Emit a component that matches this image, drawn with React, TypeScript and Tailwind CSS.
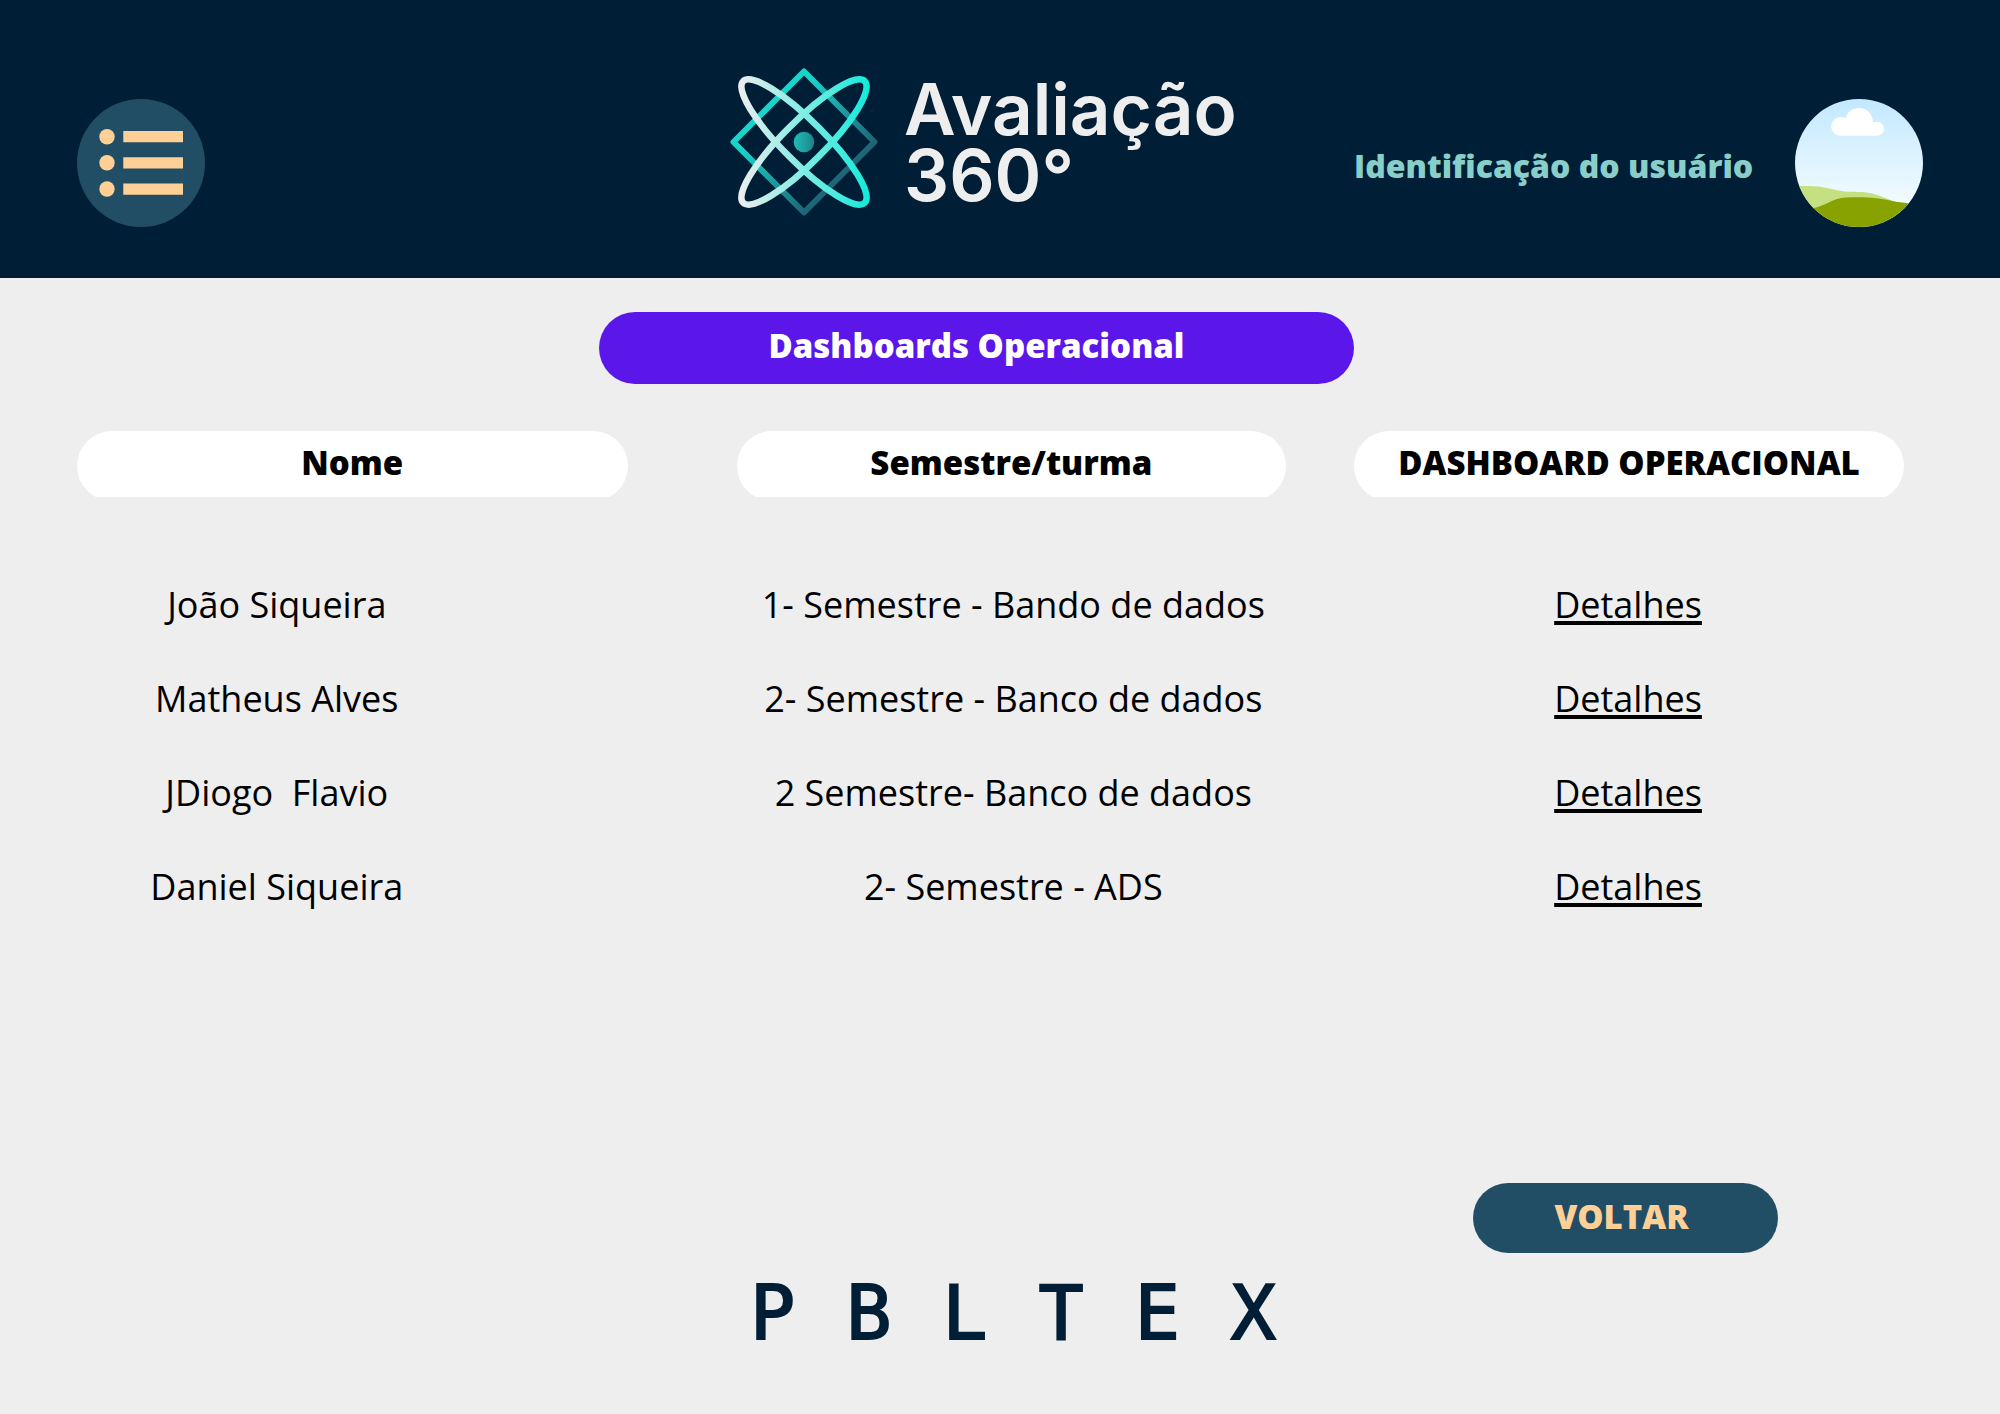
const rows = [
  { nome: "João Siqueira", turma: "1- Semestre - Bando de dados" },
  { nome: "Matheus Alves", turma: "2- Semestre - Banco de dados" },
  { nome: "JDiogo\u00a0 Flavio", turma: "2 Semestre- Banco de dados" },
  { nome: "Daniel Siqueira", turma: "2- Semestre - ADS" },
];

function AtomLogo() {
  return (
    <svg viewBox="0 0 148 148" className="size-[148px] shrink-0" fill="none" aria-hidden="true">
      <defs>
        <linearGradient id="diamond" gradientUnits="userSpaceOnUse" x1="38" y1="38" x2="110" y2="110">
          <stop offset="0" stopColor="#17d6cb" />
          <stop offset="0.15" stopColor="#18d0c7" />
          <stop offset="1" stopColor="#1f6476" />
        </linearGradient>
        <linearGradient id="orbit" gradientUnits="userSpaceOnUse" x1="9" y1="0" x2="139" y2="0">
          <stop offset="0" stopColor="#eeeeee" />
          <stop offset="1" stopColor="#12eadb" />
        </linearGradient>
        <linearGradient id="core" x1="0" y1="0" x2="1" y2="0">
          <stop offset="0" stopColor="#1bc0b9" />
          <stop offset="1" stopColor="#20818c" />
        </linearGradient>
      </defs>
      <path d="M74 3.5 144.500 74 74 144.500 3.500 74Z" stroke="url(#diamond)" strokeWidth="6" strokeLinejoin="round" />
      <path
        d="M134.800 13.200C126.700 5.100 93.400 25 59.400 59.400C25 93.400 5.100 126.700 13.200 134.800C21.300 142.900 54.600 123 88.600 88.600C123 54.600 142.900 21.300 134.800 13.200Z"
        stroke="url(#orbit)"
        strokeWidth="6.500"
      />
      <path
        d="M13.200 13.200C5.100 21.300 25 54.600 59.400 88.600C93.400 123 126.700 142.900 134.800 134.800C142.900 126.700 123 93.400 88.600 59.400C54.600 25 21.300 5.100 13.200 13.200Z"
        stroke="url(#orbit)"
        strokeWidth="6.500"
      />
      <circle cx="74" cy="74" r="10.300" fill="url(#core)" />
    </svg>
  );
}

function MenuIcon() {
  return (
    <svg viewBox="0 0 128 128" className="size-32" aria-hidden="true">
      <circle cx="64" cy="64" r="64" fill="#224e65" />
      <g fill="#ffd096">
        <circle cx="30" cy="37.700" r="7.700" />
        <circle cx="30" cy="63.700" r="7.700" />
        <circle cx="30" cy="90" r="7.700" />
        <path d="M46.300 32h59.700v11.300H46.300zM46.300 58.300h59.700v11.300H46.300zM46.300 84.500h59.700v11.300H46.300z" />
      </g>
    </svg>
  );
}

function Avatar() {
  return (
    <svg viewBox="0 0 128 128" className="size-32 shrink-0 rounded-full" role="img" aria-label="Foto do usuário">
      <defs>
        <linearGradient id="sky" x1="0" y1="0" x2="0" y2="1">
          <stop offset="0" stopColor="#c3e8ff" />
          <stop offset="0.85" stopColor="#f4fcff" />
        </linearGradient>
      </defs>
      <path d="M0 0h128v128H0z" fill="url(#sky)" />
      <path
        d="M45.500 36.700a9.300 9.300 0 0 1 0-18.600q3 0 5.500 1.200C52 13 57.500 9 64 9c8 0 14 6 14 14.500q2-1 4-.8a7 7 0 0 1 0 14z"
        fill="#fff"
      />
      <path d="M0 87h14c16 0 28 5.500 40 5.800c14 .3 18-.2 30 3.700c9 3 16 8 31 8v15H0z" fill="#c5e080" />
      <path d="M0 112c8-1 14-1 19-3c11-2 19-10 32-10.500c12-.5 26-.5 39 2c10 2 17 4 38 4v24H0z" fill="#88a200" />
    </svg>
  );
}

export default function App() {
  return (
    <div className="min-h-screen bg-[#eeeeee] font-['Open_Sans','Noto_Sans',sans-serif] text-black">
      <header className="grid grid-cols-[653fr_624fr_569fr] bg-[#001e36] px-[77px] pt-[68px] pb-[51px]">
        <button type="button" aria-label="Menu" className="mt-[31px] self-start justify-self-start rounded-full">
          <MenuIcon />
        </button>
        <div className="flex items-start gap-[26px]">
          <AtomLogo />
          <h1 className="pt-2 font-['Inter',sans-serif] text-[71px] leading-[66px] font-semibold text-[#eeeeee]">
            Avaliação
            <br />
            360°
          </h1>
        </div>
        <div className="mt-[31px] flex items-center justify-between self-start">
          <span className="pt-[6px] text-[32px] leading-[44px] font-extrabold whitespace-nowrap text-[#88cfca]">
            Identificação do usuário
          </span>
          <Avatar />
        </div>
      </header>

      <main className="pr-24 pl-[77px]">
        <div className="flex pt-[34px] pl-[522px]">
          <h2 className="w-[755px] rounded-full bg-[#5b16ea] pt-3 pb-4 text-center text-[33px] leading-[44px] font-extrabold text-white">
            Dashboards Operacional
          </h2>
        </div>

        <table className="mt-[47px] w-full table-fixed border-collapse">
          <colgroup>
            <col className="w-[36.1%]" />
            <col className="w-[33.8%]" />
            <col className="w-[30.1%]" />
          </colgroup>
          <thead>
            <tr>
              <th className="p-0 pr-[109px]">
                <div className="h-[66px] overflow-hidden">
                  <div className="h-[70px] rounded-full bg-white pt-[10px] text-[33px] leading-[44px] font-extrabold">Nome</div>
                </div>
              </th>
              <th className="p-0 pr-[68px]">
                <div className="h-[66px] overflow-hidden">
                  <div className="h-[70px] rounded-full bg-white pt-[10px] text-[33px] leading-[44px] font-extrabold">
                    Semestre/turma
                  </div>
                </div>
              </th>
              <th className="p-0">
                <div className="h-[66px] overflow-hidden">
                  <div className="h-[70px] rounded-full bg-white pt-[10px] text-[33px] leading-[44px] font-extrabold whitespace-nowrap">
                    DASHBOARD OPERACIONAL
                  </div>
                </div>
              </th>
            </tr>
            <tr aria-hidden="true">
              <td colSpan={3} className="h-[61px] p-0" />
            </tr>
          </thead>
          <tbody className="text-center text-[36px] leading-[94px] whitespace-nowrap">
            {rows.map((row) => (
              <tr key={row.nome}>
                <td className="p-0 pr-[260px]">{row.nome}</td>
                <td className="p-0 pr-16">{row.turma}</td>
                <td className="p-0 pr-[2px]">
                  <a href="#detalhes" className="underline decoration-[4px] underline-offset-[3px]">
                    Detalhes
                  </a>
                </td>
              </tr>
            ))}
          </tbody>
        </table>

        <div className="flex justify-end pt-[249px] pr-[126px]">
          <button
            type="button"
            className="w-[305px] rounded-full bg-[#224e65] pt-3 pr-3 pb-[14px] pl-1 text-[33px] leading-[44px] font-extrabold text-[#ffd096]"
          >
            VOLTAR
          </button>
        </div>
      </main>

      <footer className="flex justify-center pt-[14px] pl-[26px]">
        <div className="flex w-[526px] justify-between font-['DejaVu_Sans_Mono',monospace] text-[75px] leading-[92px] text-[#001e36] [-webkit-text-stroke:2px_#001e36]">
          <span>P</span>
          <span>B</span>
          <span>L</span>
          <span>T</span>
          <span>E</span>
          <span>X</span>
        </div>
      </footer>
    </div>
  );
}
